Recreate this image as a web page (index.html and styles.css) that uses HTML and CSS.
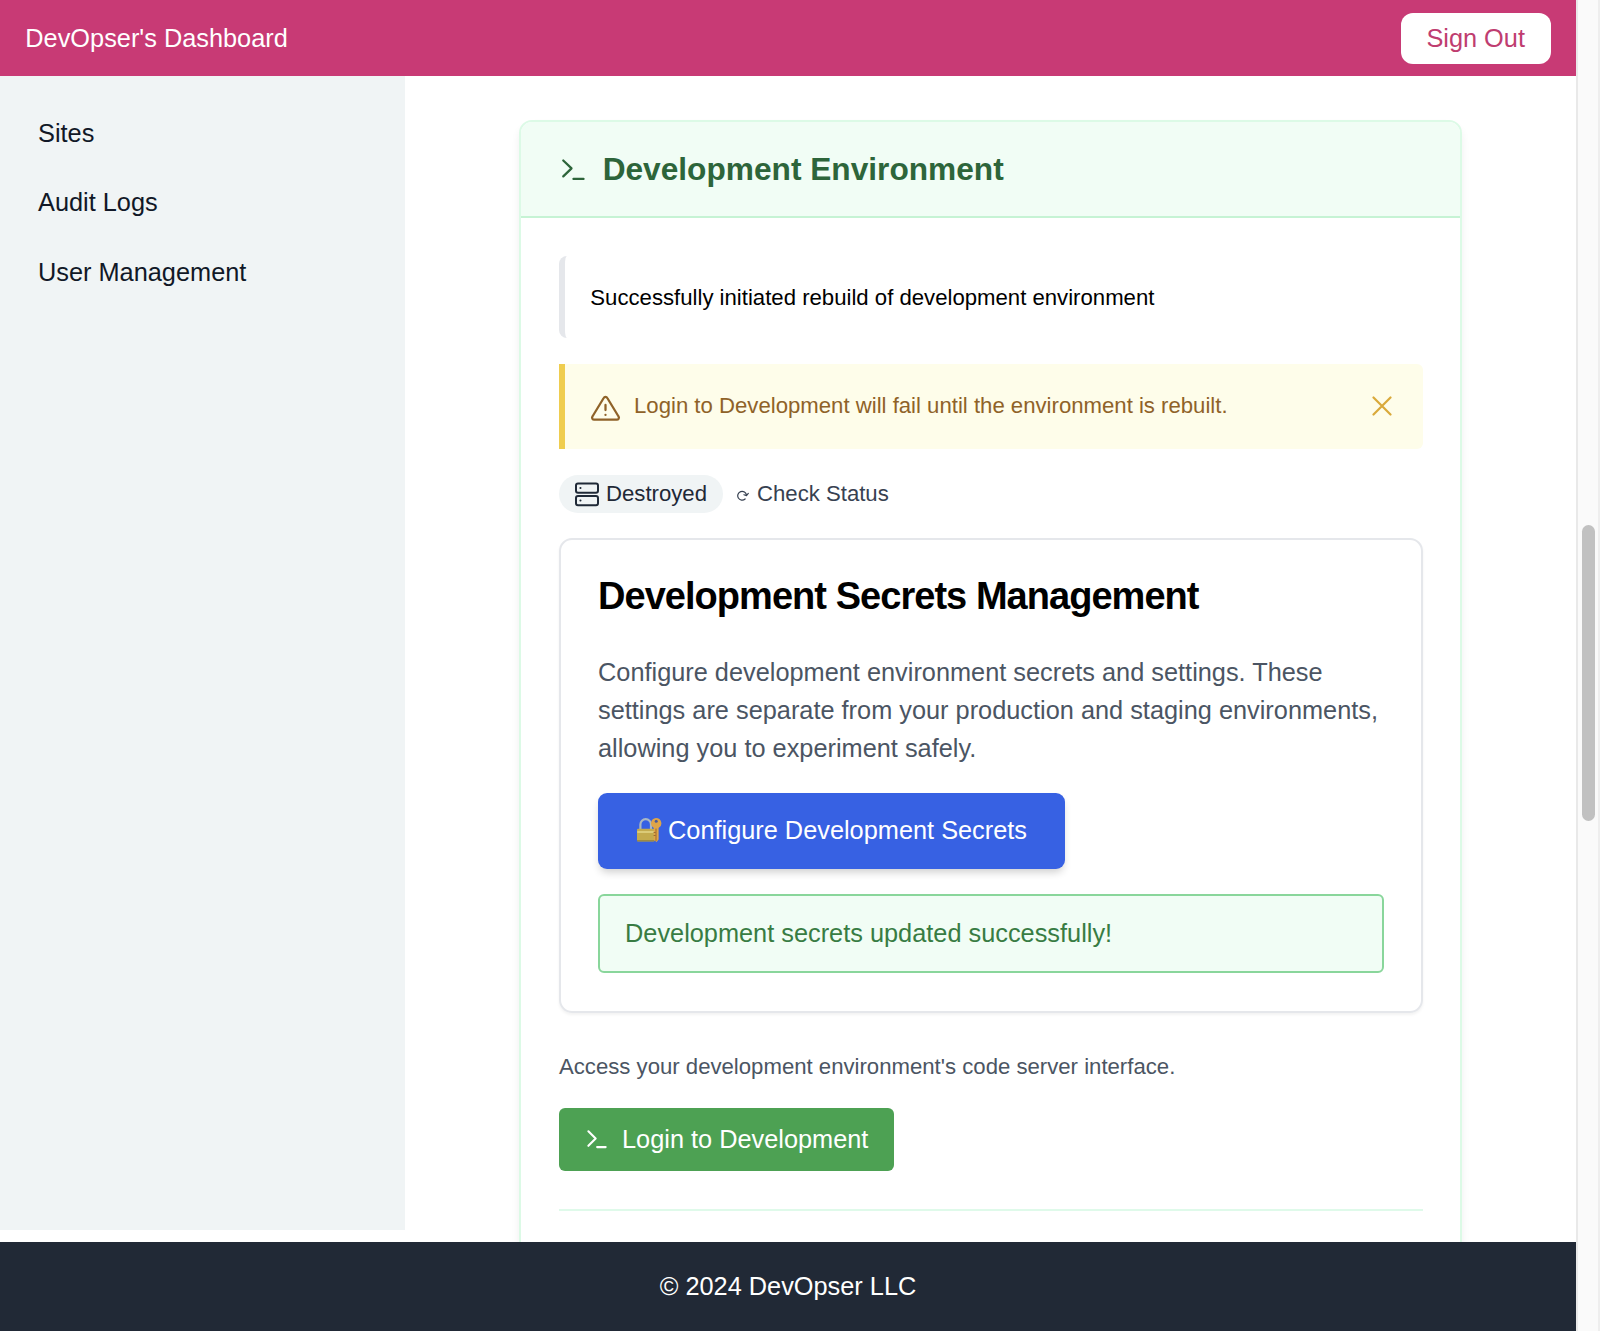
FILE: index.html
```html
<!DOCTYPE html>
<html lang="en">
<head>
    <meta charset="UTF-8">
    <meta name="viewport" content="width=device-width, initial-scale=1.0">
    <title>DevOpser's Dashboard</title>
    <link rel="stylesheet" href="styles.css">
</head>
<body>
    <div class="page">
        <header class="topbar">
            <span>DevOpser's Dashboard</span>
            <button class="sign-out">Sign Out</button>
        </header>
        <div class="content">
            <nav class="sidebar">
                <a>Sites</a>
                <a>Audit Logs</a>
                <a>User Management</a>
            </nav>
            <main class="main">
                <section class="env-card">
                    <div class="env-header">
                        <svg class="icon" viewBox="0 0 24 24"><path d="M3.3 5l6.400 6.100-6.400 6.200M11.200 19.300h7.800"/></svg>
                        <h2>Development Environment</h2>
                    </div>
                    <div class="env-body">
                        <div class="flash">Successfully initiated rebuild of development environment</div>
                        <div class="warning">
                            <svg class="icon" viewBox="0 0 24 24"><path d="M10.600 3.900 1.900 18.200a1.600 1.600 0 0 0 1.400 2.500h17.400a1.600 1.600 0 0 0 1.400-2.500L13.400 3.900a1.600 1.600 0 0 0-2.800 0zM12 9.200v4M12 16.900v.1"/></svg>
                            <span>Login to Development will fail until the environment is rebuilt.</span>
                            <svg class="close" viewBox="0 0 20 20"><path d="M1.500 1.500l17 17M18.500 1.500l-17 17"/></svg>
                        </div>
                        <div class="status-row">
                            <span class="badge">
                                <svg class="server" viewBox="0 0 25 25"><rect x="2" y="1.500" width="22" height="9.300" rx="2"/><rect x="2" y="14" width="22" height="9.300" rx="2"/><path d="M6.400 6.100h.1M6.400 18.600h.1"/></svg>
                                Destroyed
                            </span>
                            <a class="check">
                                <svg class="refresh" viewBox="0 0 13 13"><path d="M9.100 10a4.400 4.400 0 1 1 1.400-3.800M7.900 5.800l2.600.8 1.800-2.200"/></svg>
                                Check Status
                            </a>
                        </div>
                        <div class="secrets">
                            <h3>Development Secrets Management</h3>
                            <p>Configure development environment secrets and settings. These settings are separate from your production and staging environments, allowing you to experiment safely.</p>
                            <button class="configure">
                                <svg class="lock" viewBox="0 0 26 26">
                                    <path d="M4.400 13V7.400a5.300 5.300 0 0 1 10.600 0V13" stroke="#a9b7c4" stroke-width="2.200"/>
                                    <rect x="1" y="11.800" width="17.500" height="12.800" rx="1" fill="#c3ab4e"/>
                                    <path d="M1.500 23.800h16.500" stroke="#8d7d3c"/>
                                    <path d="M2 15h15.500" stroke="#dbcb78" stroke-width="2"/>
                                    <path d="M20 1a5.400 5.400 0 0 1 2.600 10.100v11.400l-2 2.500-2.800-2v-11.900A5.400 5.400 0 0 1 20 1z" fill="#dfa548"/>
                                    <path d="M20 12v11.500M18 15.500h1.200M18 18.500h1.200" stroke="#8c5d28" stroke-width=".8"/>
                                    <circle cx="20.200" cy="4.200" r="1.500" fill="#4b5a9a"/>
                                </svg>
                                <span>Configure Development Secrets</span>
                            </button>
                            <div class="success">Development secrets updated successfully!</div>
                        </div>
                        <p class="access">Access your development environment's code server interface.</p>
                        <button class="login">
                            <svg viewBox="0 0 24 24"><path d="M4.200 4.100l7 7-7 7M12.600 19.300h8.200"/></svg>
                            Login to Development
                        </button>
                        <hr>
                    </div>
                </section>
            </main>
        </div>
        <footer class="footer">© 2024 DevOpser LLC</footer>
    </div>
    <div class="scrollbar"><div class="thumb"></div></div>
</body>
</html>
```
FILE: styles.css
```css
* {
    box-sizing: border-box;
}
html {
    font-size: 25.333px;
}
body {
    margin: 0;
    height: 1331px;
    display: flex;
    overflow: hidden;
    font-family: "Liberation Sans", Arial, sans-serif;
    line-height: 1.5;
    color: #000;
    background: #fff;
}
h2, h3, p {
    margin: 0;
}
button {
    border: 0;
    font: inherit;
    white-space: nowrap;
}
svg {
    flex-shrink: 0;
    fill: none;
    stroke: currentColor;
    stroke-linecap: round;
    stroke-linejoin: round;
}
.page {
    width: 1576px;
    height: 1331px;
    display: flex;
    flex-direction: column;
}
.topbar {
    height: 76px;
    flex-shrink: 0;
    padding: 0 1rem;
    display: flex;
    align-items: center;
    justify-content: space-between;
    background: #c83a75;
    color: #fff;
}
.topbar span {
    padding-top: 2px;
}
.sign-out {
    width: 150px;
    height: 51px;
    padding: 2px 0 0;
    border-radius: 12px;
    background: #fff;
    color: #bf3d70;
}
.content {
    height: 1166px;
    flex-shrink: 0;
    display: flex;
    overflow: hidden;
}
.sidebar {
    width: 405px;
    height: 1154px;
    padding: 26px 1rem;
    background: #f0f4f5;
    color: #111827;
}
.sidebar a {
    display: block;
    padding: 0.5rem;
    margin-bottom: 0.25rem;
}
.main {
    flex: 1;
    padding: 44px 114px 0 114px;
}
.env-card {
    height: 1300px;
    border: 2px solid #dcfae6;
    border-radius: 13px;
    background: #fff;
    box-shadow: 0 6px 10px -1px rgba(0, 0, 0, 0.08);
    overflow: hidden;
}
.env-header {
    height: 96px;
    padding: 1px 1.5rem 0;
    display: flex;
    align-items: center;
    gap: 0.5rem;
    background: #f1fdf5;
    border-bottom: 2px solid #c6f3d4;
    color: #2d653a;
}
.env-header h2 {
    font-size: 1.25rem;
    font-weight: 700;
    line-height: 1.4;
}
.icon {
    width: 31px;
    height: 31px;
    stroke-width: 1.75;
}
.env-body {
    padding: 38px 37px 0 38px;
}
.flash {
    height: 82px;
    padding: 2px 0 0 1rem;
    display: flex;
    align-items: center;
    border-left: 6px solid #e5e7eb;
    border-radius: 8px;
    font-size: 0.875rem;
}
.warning {
    height: 85px;
    margin-top: 26px;
    padding: 0 31px 2px 25px;
    display: flex;
    align-items: center;
    background: #fefdea;
    border-left: 6px solid #efcd4f;
    border-radius: 0 6px 6px 0;
    color: #8f6228;
    font-size: 0.875rem;
}
.warning .icon {
    margin: 6px 13px 0 0;
}
.close {
    width: 20px;
    height: 20px;
    margin-left: auto;
    color: #d9a93a;
    stroke-width: 2.2;
}
.status-row {
    margin-top: 26px;
    display: flex;
    align-items: center;
    gap: 13px;
    font-size: 0.875rem;
    color: #374151;
}
.badge {
    height: 38px;
    padding: 0 16px 0 15px;
    display: flex;
    align-items: center;
    gap: 7px;
    border-radius: 19px;
    background: #f0f4f5;
    color: #1f2937;
}
.server {
    width: 25px;
    height: 25px;
    stroke-width: 2;
}
.check {
    display: flex;
    align-items: center;
    gap: 8px;
}
.refresh {
    width: 13px;
    height: 13px;
    margin-top: 3px;
    stroke-width: 1.2;
}
.secrets {
    height: 475px;
    margin-top: 25px;
    padding: 36px 37px 0;
    border: 2px solid #e5e7eb;
    border-radius: 13px;
    box-shadow: 0 2px 3px rgba(0, 0, 0, 0.05);
}
.secrets h3 {
    font-size: 1.5rem;
    line-height: 40px;
    letter-spacing: -0.025em;
}
.secrets p {
    margin-top: 38px;
    color: #4b5563;
}
.configure {
    width: 467px;
    height: 76px;
    margin-top: 25px;
    padding: 0 0 0 38px;
    display: flex;
    align-items: center;
    gap: 6px;
    border-radius: 9px;
    background: #3761e3;
    color: #fff;
    box-shadow: 0 5px 9px -2px rgba(0, 0, 0, 0.2);
}
.configure span {
    padding-top: 1px;
}
.lock {
    width: 26px;
    height: 26px;
    margin-top: -2px;
    stroke: none;
}
.success {
    height: 79px;
    margin-top: 25px;
    padding: 2px 0 0 25px;
    display: flex;
    align-items: center;
    border: 2px solid #89d69b;
    border-radius: 6px;
    background: #f1fdf5;
    color: #387c43;
}
.access {
    margin-top: 37px;
    font-size: 0.875rem;
    color: #4b5563;
}
.login {
    width: 335px;
    height: 63px;
    margin-top: 25px;
    padding: 0 0 0 25px;
    display: flex;
    align-items: center;
    gap: 13px;
    border-radius: 6px;
    background: #4da153;
    color: #fff;
}
.login svg {
    width: 25px;
    height: 25px;
    stroke-width: 2;
}
hr {
    margin: 38px 0 0;
    border: 0;
    border-top: 2px solid #dffaea;
}
.footer {
    flex: 1;
    display: flex;
    align-items: center;
    justify-content: center;
    background: #212936;
    color: #fff;
}
.scrollbar {
    width: 24px;
    height: 1331px;
    padding: 525px 0 0 4px;
    background: #fafafa;
    border-left: 2px solid #e9e9e9;
    border-right: 2px solid #eee;
}
.thumb {
    width: 13px;
    height: 296px;
    border-radius: 7px;
    background: #c1c1c1;
}
```
